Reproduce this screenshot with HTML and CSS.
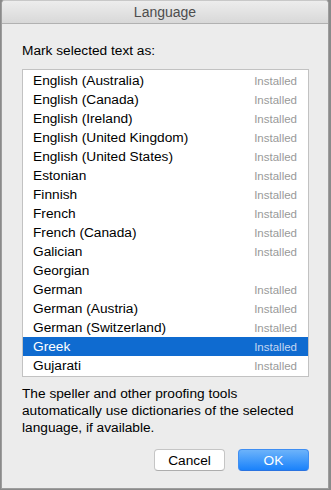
FILE: index.html
```html
<!DOCTYPE html>
<html lang="en">
<head>
  <meta charset="UTF-8" />
  <title>Language</title>
  <link rel="stylesheet" href="styles.css">
</head>
<body>
  <div class="window">
    <header class="titlebar">Language</header>
    <div class="content">
      <p class="label">Mark selected text as:</p>
      <ul class="list">
        <li><span>English (Australia)</span><em>Installed</em></li>
        <li><span>English (Canada)</span><em>Installed</em></li>
        <li><span>English (Ireland)</span><em>Installed</em></li>
        <li><span>English (United Kingdom)</span><em>Installed</em></li>
        <li><span>English (United States)</span><em>Installed</em></li>
        <li><span>Estonian</span><em>Installed</em></li>
        <li><span>Finnish</span><em>Installed</em></li>
        <li><span>French</span><em>Installed</em></li>
        <li><span>French (Canada)</span><em>Installed</em></li>
        <li><span>Galician</span><em>Installed</em></li>
        <li><span>Georgian</span></li>
        <li><span>German</span><em>Installed</em></li>
        <li><span>German (Austria)</span><em>Installed</em></li>
        <li><span>German (Switzerland)</span><em>Installed</em></li>
        <li class="selected"><span>Greek</span><em>Installed</em></li>
        <li><span>Gujarati</span><em>Installed</em></li>
      </ul>
      <p class="note">The speller and other proofing tools automatically use dictionaries of the selected language, if available.</p>
      <div class="buttons">
        <button class="btn">Cancel</button>
        <button class="btn primary">OK</button>
      </div>
    </div>
  </div>
</body>
</html>
```

FILE: styles.css
```css
* {
  box-sizing: border-box;
}
body {
  margin: 0;
  width: 331px;
  height: 490px;
  background: #8a8a8a;
  font-family: 'Liberation Sans', Arial, sans-serif;
  color: #000;
}
.window {
  margin: 0 2px 0 1px;
  height: 489px;
  background: #ececec;
  border: 1px solid #9d9d9d;
  border-top-color: #c8c8c8;
  border-radius: 4px 4px 0 0;
  overflow: hidden;
}
.titlebar {
  height: 23px;
  background: linear-gradient(#ededed, #d8d8d8);
  border-bottom: 1px solid #b1b1b1;
  text-align: center;
  font-size: 14px;
  line-height: 22px;
  color: #4d4d4d;
}
.content {
  padding: 0 19px 0 20px;
}
.label {
  margin: 18px 0 0;
  font-size: 13.7px;
  line-height: 17px;
}
.list {
  list-style: none;
  margin: 10px 0 0;
  padding: 1px 0 0;
  background: #fff;
  border: 1px solid #c2c2c2;
  height: 308px;
}
.list li {
  display: flex;
  justify-content: space-between;
  align-items: center;
  height: 19px;
  padding: 0 11px 0 10px;
  font-size: 13.7px;
}
.list em {
  font-style: normal;
  font-size: 11.5px;
  color: #999;
}
.list .selected {
  background: #0f6bd0;
  color: #fff;
}
.list .selected em {
  color: #c4d7f2;
}
.note {
  margin: 8px 0 0;
  font-size: 13.7px;
  line-height: 17px;
}
.buttons {
  display: flex;
  justify-content: flex-end;
  gap: 13px;
  margin-top: 13px;
}
.btn {
  width: 71px;
  height: 22px;
  padding: 0;
  font-family: inherit;
  font-size: 13.7px;
  background: #fff;
  border: 1px solid #c5c5c5;
  border-bottom-color: #adadad;
  border-radius: 4px;
  color: #000;
}
.primary {
  background: linear-gradient(#6cb3fa, #1a82fb);
  border-color: #3f8ef2 #3f8ef2 #2a73e0;
  color: #fff;
}
```
